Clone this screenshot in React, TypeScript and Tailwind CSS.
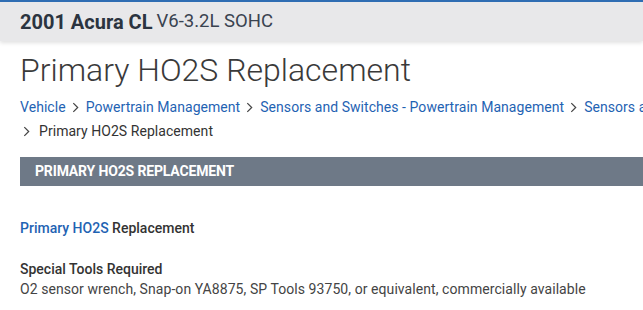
import React from 'react';

const CRUMBS = [
  'Vehicle',
  'Powertrain Management',
  'Sensors and Switches - Powertrain Management',
  'Sensors and Switches - Powertrain Management',
];

function Chevron({ className = '' }: { className?: string }) {
  return (
    <svg viewBox="0 0 8 12" className={`w-[7px] h-[11px] ${className}`} fill="none" stroke="currentColor" strokeWidth="1.4">
      <path d="M1.5 1 L6.5 6 L1.5 11" />
    </svg>
  );
}

export default function App() {
  return (
    <div className="w-[643px] h-[310px] overflow-hidden bg-white font-['Roboto',sans-serif] text-[#333]">
      {/* Vehicle header */}
      <div className="border-t-2 border-[#2f6db3] bg-[#e8e8ea] h-[41px] flex items-center px-5 shadow-[0_2px_4px_rgba(0,0,0,0.12)] relative">
        <span className="text-[20px] font-bold text-[#2b3440]">2001 Acura CL</span>
        <span className="ml-[4px] text-[18.5px] text-[#3a4350]">V6-3.2L SOHC</span>
      </div>

      <div className="w-[900px] pl-5">
        <h1 className="mt-[10px] text-[32px] font-light leading-[38px] text-[#3a3a3a]">Primary HO2S Replacement</h1>

        {/* Breadcrumb */}
        <div className="mt-[6px] flex flex-wrap items-center text-[14px] leading-[24px] tracking-[0.05px]">
          {CRUMBS.map((c, i) => (
            <span key={i} className="flex items-center">
              {i > 0 && <Chevron className="ml-[6px] mr-[7px] text-[#444]" />}
              <span className="text-[#1f63b3]">{c}</span>
            </span>
          ))}
          <span className="flex items-center">
            <Chevron className="ml-[3px] mr-[9px] text-[#444]" />
            <span className="text-[#333]">Primary HO2S Replacement</span>
          </span>
        </div>

        {/* Section bar */}
        <div className="mt-[14px] h-[29px] bg-[#6e7987] flex items-center pl-[15px]">
          <span className="text-[14px] font-bold text-white tracking-[-0.15px]">PRIMARY HO2S REPLACEMENT</span>
        </div>

        <div className="mt-[33px] text-[14px] font-medium leading-[18px]">
          <span className="text-[#1f63b3]">Primary HO2S</span> <span className="text-[#333]">Replacement</span>
        </div>

        <div className="mt-[22px] text-[14px] font-medium leading-[20px] text-[#333]">Special Tools Required</div>
        <div className="text-[14px] leading-[20px] tracking-[0.07px] text-[#444]">
          O2 sensor wrench, Snap-on YA8875, SP Tools 93750, or equivalent, commercially available
        </div>
      </div>
    </div>
  );
}
